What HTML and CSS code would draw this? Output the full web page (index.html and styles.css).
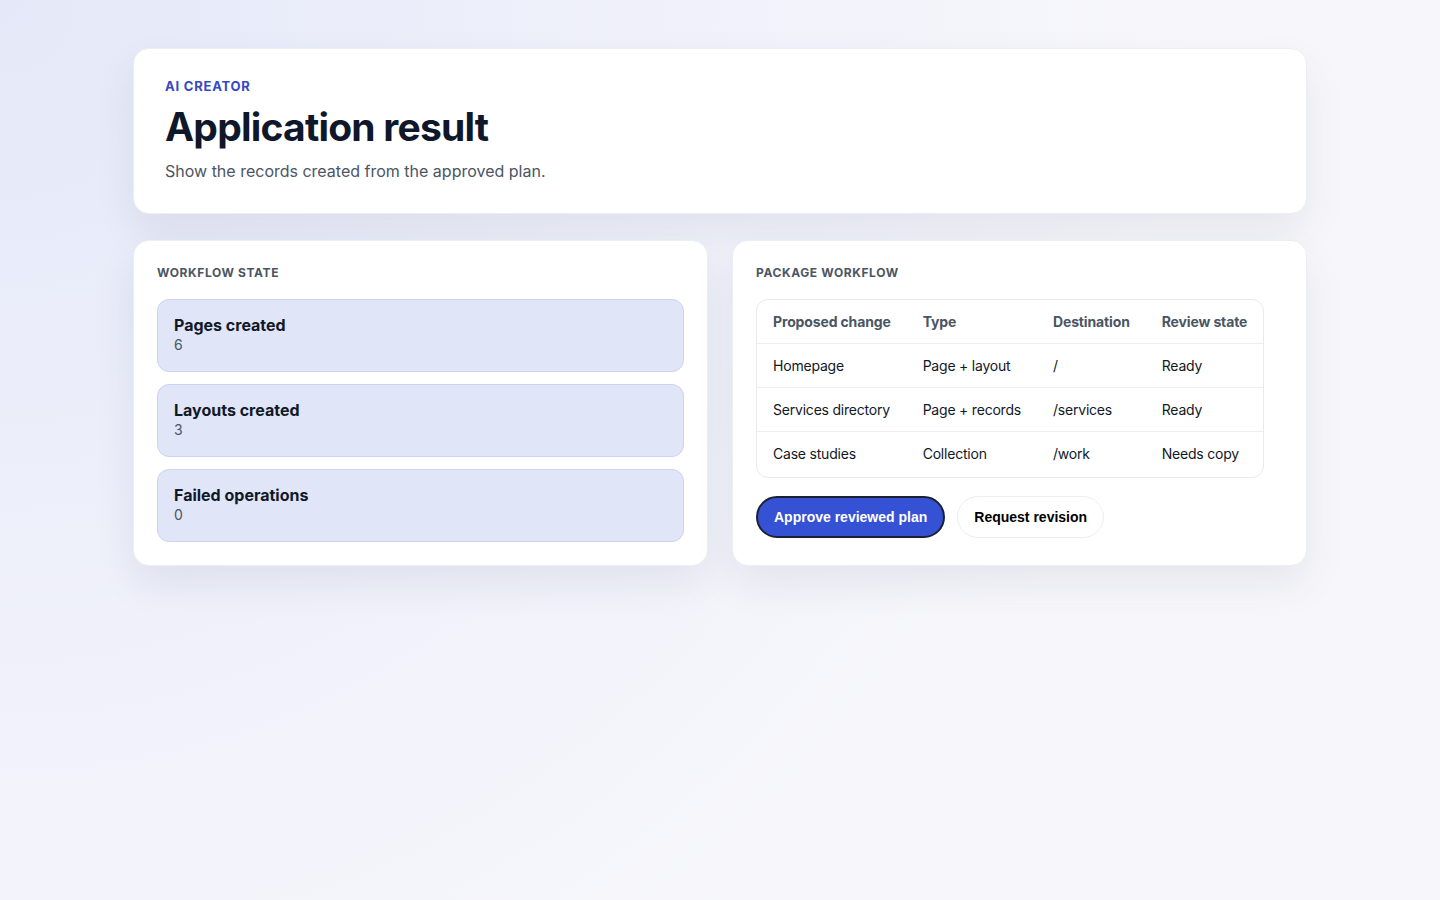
FILE: index.html
```html
<html>
<head>
	<meta charset="utf-8">
	<title>Application result</title>
	<link rel="stylesheet" href="styles.css">
</head>
<body>
	<main class="page">
		<header class="card hero">
			<div class="eyebrow">AI Creator</div>
			<h1>Application result</h1>
			<p class="lead">Show the records created from the approved plan.</p>
		</header>
		<section class="grid">
			<div class="card panel">
				<h2 class="panel-title">Workflow state</h2>
				<div class="stats">
					<div class="stat">
						<div class="stat-label">Pages created</div>
						<div class="stat-value">6</div>
					</div>
					<div class="stat">
						<div class="stat-label">Layouts created</div>
						<div class="stat-value">3</div>
					</div>
					<div class="stat">
						<div class="stat-label">Failed operations</div>
						<div class="stat-value">0</div>
					</div>
				</div>
			</div>
			<div class="card panel">
				<h2 class="panel-title">Package workflow</h2>
				<div class="table-wrap">
					<table>
						<thead>
							<tr>
								<th>Proposed change</th>
								<th>Type</th>
								<th>Destination</th>
								<th>Review state</th>
							</tr>
						</thead>
						<tbody>
							<tr>
								<td>Homepage</td>
								<td>Page + layout</td>
								<td>/</td>
								<td>Ready</td>
							</tr>
							<tr>
								<td>Services directory</td>
								<td>Page + records</td>
								<td>/services</td>
								<td>Ready</td>
							</tr>
							<tr>
								<td>Case studies</td>
								<td>Collection</td>
								<td>/work</td>
								<td>Needs copy</td>
							</tr>
						</tbody>
					</table>
				</div>
				<div class="actions">
					<button class="btn btn-primary">Approve reviewed plan</button>
					<button class="btn btn-ghost">Request revision</button>
				</div>
			</div>
		</section>
	</main>
</body>
</html>
```

FILE: styles.css
```css
* {
	box-sizing: border-box;
}
html, body {
	margin: 0;
	min-height: 100%;
}
body {
	font-family: Inter, "Noto Sans", sans-serif;
	color: #111827;
	background:
		radial-gradient(circle at 0% 0%, #e4e8f8 0%, rgba(233,236,250,0.6) 35%, rgba(246,246,251,0) 70%),
		#f7f7fb;
	min-height: 900px;
}
.page {
	width: 1174px;
	margin: 0 auto;
	padding-top: 48px;
}
.card {
	background: #fff;
	border: 1px solid #eceef3;
	border-radius: 16px;
	box-shadow: 0 18px 40px rgba(30, 41, 80, 0.08);
}
.hero {
	padding: 29px 31px 30px;
}
.eyebrow {
	font-size: 13px;
	font-weight: 700;
	letter-spacing: 0.06em;
	text-transform: uppercase;
	color: #3448c5;
	line-height: 16px;
}
h1 {
	margin: 10px 0 0;
	font-size: 39px;
	line-height: 46px;
	font-weight: 700;
	letter-spacing: -0.02em;
	color: #0f172a;
}
.lead {
	margin: 9px 0 0;
	font-size: 16px;
	line-height: 24px;
	color: #4b5563;
}

.grid {
	display: grid;
	grid-template-columns: 1fr 1fr;
	gap: 24px;
	margin-top: 26px;
}
.panel {
	padding: 24px 23px 23px;
}
.panel-title {
	margin: 0;
	font-size: 12px;
	line-height: 16px;
	font-weight: 700;
	letter-spacing: 0.05em;
	text-transform: uppercase;
	color: #4b5563;
}
.stats {
	display: flex;
	flex-direction: column;
	gap: 12px;
	margin-top: 18px;
}
.stat {
	background: #e0e5f8;
	border: 1px solid #cdd3ef;
	border-radius: 12px;
	padding: 15px 16px 17px;
	height: 73px;
}
.stat-label {
	font-size: 16px;
	line-height: 20px;
	font-weight: 700;
	color: #111827;
}
.stat-value {
	font-size: 14px;
	line-height: 20px;
	color: #4b5563;
}

.table-wrap {
	width: fit-content;
	margin-top: 18px;
	border: 1px solid #e8eaef;
	border-radius: 12px;
	overflow: hidden;
}
table {
	border-collapse: collapse;
	font-size: 14px;
}
th, td {
	text-align: left;
	padding: 12px 16px;
	line-height: 19px;
	white-space: nowrap;
}
th {
	font-weight: 700;
	color: #4b5563;
	letter-spacing: -0.01em;
	border-bottom: 1px solid #eceef2;
}
td {
	color: #111827;
	letter-spacing: -0.015em;
	border-bottom: 1px solid #eceef2;
}
tbody tr:last-child td {
	border-bottom: none;
	padding-bottom: 14px;
}
.actions {
	display: flex;
	gap: 12px;
	margin-top: 18px;
}
.btn {
	font-family: "Liberation Sans", Arial, sans-serif;
	font-size: 14px;
	font-weight: 700;
	height: 42px;
	padding: 0 16px;
	border-radius: 999px;
	cursor: pointer;
}
.btn-primary {
	background: #3551d4;
	color: #fff;
	border: 2px solid #1b2133;
}
.btn-ghost {
	background: #fff;
	color: #000;
	border: 1px solid #eceef2;
}
```
